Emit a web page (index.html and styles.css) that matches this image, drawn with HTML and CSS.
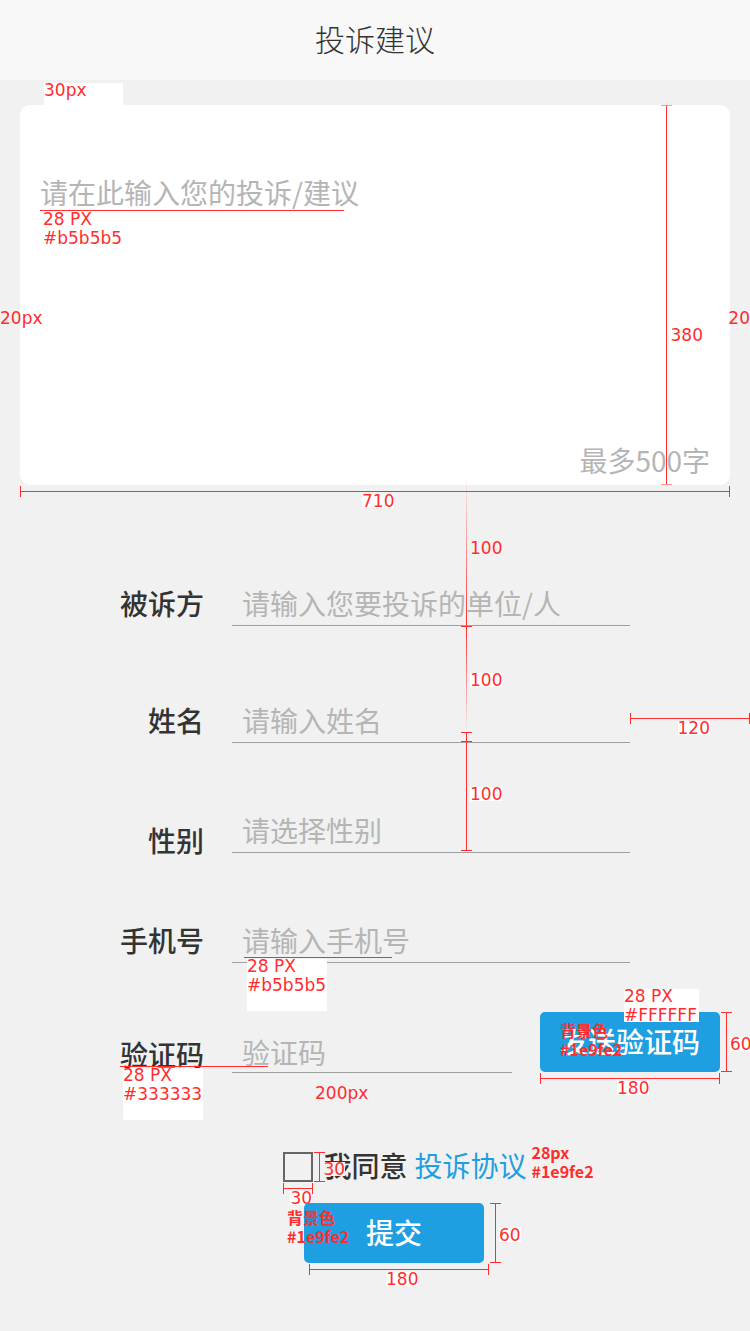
FILE: index.html
```html
<!DOCTYPE html>
<html lang="zh-CN">
<head>
<meta charset="utf-8">
<meta name="viewport" content="width=device-width, initial-scale=1">
<title>投诉建议</title>
<link rel="stylesheet" href="styles.css">
</head>
<body>
<header class="header"><h1 class="title">投诉建议</h1></header>
<form class="form">
  <section class="card">
    <textarea class="message" aria-label="投诉/建议" placeholder="请在此输入您的投诉/建议"></textarea>
    <p class="limit">最多500字</p>
    <span class="note spec filled card-gap">30px</span>
    <span class="note spec card-type">28 PX<br>#b5b5b5</span>
    <span class="rule card-rule"></span>
    <span class="note card-left">20px</span>
    <span class="note card-right">20</span>
    <span class="dim-v soft card-height"></span>
    <span class="note card-height-text">380</span>
    <span class="dim-h card-width"></span>
    <span class="note boxed card-width-text">710</span>
  </section>

  <div class="row first">
    <label class="label" for="target">被诉方</label>
    <input class="field" id="target" type="text" placeholder="请输入您要投诉的单位/人">
    <span class="fade first-fade"></span>
    <span class="rule first-cap"></span>
    <span class="note first-text">100</span>
  </div>
  <div class="row second">
    <label class="label" for="name">姓名</label>
    <input class="field" id="name" type="text" placeholder="请输入姓名">
    <span class="fade reverse second-fade"></span>
    <span class="note boxed second-text">100</span>
    <span class="dim-v second-step"></span>
    <span class="dim-h second-side"></span>
    <span class="note boxed second-side-text">120</span>
  </div>
  <div class="row">
    <label class="label low" for="gender">性别</label>
    <select class="field" id="gender">
      <option value="">请选择性别</option>
      <option>男</option>
      <option>女</option>
    </select>
    <span class="dim-v third-step"></span>
    <span class="note boxed third-text">100</span>
  </div>
  <div class="row">
    <label class="label" for="phone">手机号</label>
    <input class="field" id="phone" type="tel" placeholder="请输入手机号">
    <span class="note spec filled phone-type">28 PX<br>#b5b5b5</span>
    <span class="rule phone-rule"></span>
  </div>
  <div class="row code">
    <label class="label" for="code">验证码</label>
    <input class="field" id="code" type="text" placeholder="验证码">
    <div class="action">
      <button class="button" type="button">发送验证码</button>
      <span class="note spec filled action-type">28 PX<br>#FFFFFF</span>
      <span class="note bold action-color">背景色<br>#1e9fe2</span>
      <span class="dim-v action-height"></span>
      <span class="note boxed action-height-text">60</span>
      <span class="dim-h action-width"></span>
      <span class="note boxed action-width-text">180</span>
    </div>
    <span class="note spec filled code-type">28 PX<br>#333333</span>
    <span class="rule code-rule"></span>
    <span class="note code-gap">200px</span>
  </div>

  <div class="agreement">
    <div class="consent">
      <input class="check" id="agree" type="checkbox">
      <label for="agree">我同意</label>
      <a class="link" href="#terms">投诉协议</a>
      <span class="dim-v check-height"></span>
      <span class="note page check-height-text">30</span>
      <span class="dim-h check-width"></span>
      <span class="note boxed check-width-text">30</span>
      <span class="note bold link-type">28px<br>#1e9fe2</span>
    </div>
  </div>
  <div class="footer">
    <div class="action">
      <button class="button" type="submit">提交</button>
      <span class="note bold submit-color">背景色<br>#1e9fe2</span>
      <span class="dim-v submit-height"></span>
      <span class="note boxed submit-height-text">60</span>
      <span class="dim-h submit-width"></span>
      <span class="note boxed submit-width-text">180</span>
    </div>
  </div>
</form>
</body>
</html>
```
FILE: styles.css
```css
:root {
  --page: #f1f1f1;
  --blue: #1e9fe2;
  --red: #ff2d2d;
  --hint: #b5b5b5;
}
* { box-sizing: border-box; }
body {
  margin: 0;
  min-height: 100vh;
  overflow-x: hidden;
  background: var(--page);
  color: #333;
  font: 28px/42px "Noto Sans CJK SC", sans-serif;
}
input, textarea, select, button { font: inherit; color: inherit; }

.header { padding: 17px 20px 21px; background: #f8f8f8; }
.title { margin: 0; font-size: 30px; font-weight: 300; line-height: 42px; text-align: center; }

.form { padding: 25px 0 68px; }

.card {
  position: relative;
  display: flex;
  flex-direction: column;
  min-height: 380px;
  margin: 0 20px;
  padding: 66px 20px 4px;
  border-radius: 10px;
  background: #fff;
}
.message {
  flex: 1;
  width: 100%;
  padding: 0;
  border: 0;
  outline: 0;
  resize: none;
  background: transparent;
}
.limit { margin: 0; color: var(--hint); text-align: right; }
::placeholder { color: var(--hint); opacity: 1; }

.row {
  position: relative;
  display: grid;
  grid-template-columns: 204px 1fr;
  column-gap: 28px;
  margin-top: 68px;
  padding-right: 120px;
}
.row.first { margin-top: 99px; }
.row.second { margin-top: 75px; }
.label { line-height: 38px; text-align: right; font-weight: 500; }
.label.low { align-self: end; line-height: 26px; }
.field {
  width: 100%;
  min-width: 0;
  height: 42px;
  padding: 0 10px 4px;
  border: 0;
  border-bottom: 1px solid #a0a0a0;
  border-radius: 0;
  outline: 0;
  appearance: none;
  background: transparent;
  line-height: 36px;
}
select.field { color: var(--hint); }
.row.code {
  grid-template-columns: 204px 1fr 180px;
  align-items: end;
  min-height: 61px;
  margin-top: 49px;
  padding-right: 30px;
}
.code .field { height: 38px; }
.code .action { align-self: start; }

.action { position: relative; width: 180px; }
.button {
  display: block;
  width: 100%;
  height: 60px;
  padding: 0 0 2px;
  border: 0;
  border-radius: 5px;
  background: var(--blue);
  color: #fff;
  font-weight: 500;
}

.agreement { display: flex; justify-content: center; margin-top: 79px; padding-left: 60px; }
.consent { position: relative; display: flex; height: 30px; line-height: 26px; font-weight: 500; }
.check {
  width: 30px;
  height: 30px;
  margin: 0 10px 0 0;
  border: 2px solid #666;
  appearance: none;
}
.check:checked { background: var(--blue); }
.link { margin-left: 7px; color: var(--blue); font-weight: 400; text-decoration: none; }
.footer { display: flex; justify-content: center; margin-top: 21px; padding-left: 38px; }

/* Measurement overlay */
.note, .rule, .fade, .dim-h, .dim-v { position: absolute; pointer-events: none; }
.note {
  color: var(--red);
  font: 17px/14px "DejaVu Sans", sans-serif;
  white-space: nowrap;
}
.note.spec { line-height: 19px; }
.note.bold { font: bold 16px/19px "Noto Sans CJK SC", sans-serif; }
.note.boxed { background: #fff; }
.note.page { background: var(--page); }
.note.filled { background: linear-gradient(#fff, #fff) no-repeat 0 2px; }
.rule { height: 1px; background: var(--red); }
.fade { width: 1px; background: linear-gradient(transparent, var(--red)); }
.fade.reverse { background: linear-gradient(var(--red), transparent); }
.dim-h {
  height: 11px;
  border: solid var(--red);
  border-width: 0 1px;
  background: linear-gradient(var(--red), var(--red)) center / 100% 1px no-repeat;
}
.dim-v {
  width: 11px;
  border: solid var(--red);
  border-width: 1px 0;
  background: linear-gradient(var(--red), var(--red)) center / 1px 100% no-repeat;
}
.dim-v.soft { border-color: #ff9696; }

.card-gap { left: 24px; top: -24px; width: 79px; height: 24px; }
.card-type { left: 23px; top: 105px; }
.card-rule { left: 20px; top: 105px; width: 304px; }
.card-left { left: -20px; top: 206px; }
.card-right { right: -20px; top: 206px; }
.card-height { right: 58px; top: 0; bottom: 0; }
.card-height-text { right: 27px; top: 223px; }
.card-width { left: 0; right: 0; top: 381px; }
.card-width-text { left: 342px; top: 389px; }

.first-fade { left: 466px; top: -108px; height: 150px; }
.first-cap { left: 461px; bottom: -1px; width: 11px; }
.first-text { left: 470px; top: -43px; }
.second-fade { left: 466px; top: -75px; height: 106px; }
.second-text { left: 470px; top: -28px; }
.second-step { left: 461px; top: 31px; height: 10px; }
.second-side { right: 0; top: 12px; width: 120px; }
.second-side-text { right: 40px; top: 20px; }
.third-step { left: 461px; top: -70px; height: 110px; }
.third-text { left: 470px; top: -24px; }

.phone-type { left: 247px; top: 36px; width: 80px; height: 54px; }
.phone-rule { left: 244px; top: 36px; width: 148px; }
.code-type { left: 123px; top: 54px; width: 80px; height: 54px; }
.code-rule { left: 120px; top: 54px; width: 148px; }
.code-gap { left: 315px; top: 74px; }

.action-type { left: 84px; top: -25px; width: 75px; height: 35px; }
.action-color { left: 20px; top: 9px; }
.action-height { left: 181px; top: 0; height: 60px; }
.action-height-text { left: 190px; top: 25px; }
.action-width { left: 0; top: 61px; width: 180px; }
.action-width-text { left: 77px; top: 69px; }

.check-height { left: 31px; top: 0; height: 30px; }
.check-height-text { left: 40px; top: 10px; }
.check-width { left: 0; top: 31px; width: 30px; }
.check-width-text { left: 7px; top: 39px; }
.link-type { left: 248px; top: -9px; }

.submit-color { left: -17px; top: 5px; }
.submit-height { left: 186px; top: 0; height: 60px; }
.submit-height-text { left: 195px; top: 25px; }
.submit-width { left: 5px; top: 61px; width: 180px; }
.submit-width-text { left: 82px; top: 69px; }
```
